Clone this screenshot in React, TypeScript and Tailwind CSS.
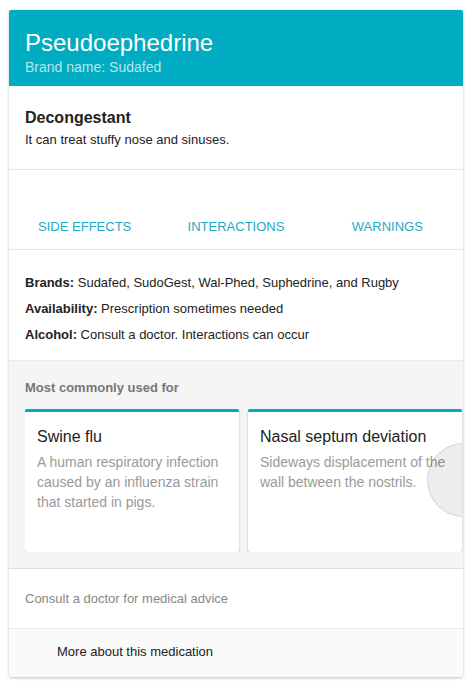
import React from "react";

const font = { fontFamily: '"Liberation Sans", Arial, sans-serif' };

const uses = [
  {
    title: "Swine flu",
    text: "A human respiratory infection caused by an influenza strain that started in pigs."
  },
  {
    title: "Nasal septum deviation",
    text: "Sideways displacement of the wall between the nostrils."
  }
];

export default function App() {
  return (
    <div className="min-h-[686px] bg-white pt-[10px] pl-[9px]" style={font}>
      <div className="w-[454px] rounded-[2px] bg-white shadow-[0_1px_3px_rgba(0,0,0,0.25)] overflow-hidden">
        {/* header */}
        <div className="h-[76px] bg-[#00acc1] pt-[19px] px-4">
          <div className="text-[24px] leading-[28px] text-white">Pseudoephedrine</div>
          <div className="mt-px text-[14px] leading-[18px] text-[#b5e6ed]">Brand name: Sudafed</div>
        </div>

        {/* summary */}
        <div className="px-4 pt-[22px] pb-[20px] border-b border-[#e8e8e8]">
          <div className="text-[16px] leading-[20px] font-bold text-[#222]">Decongestant</div>
          <div className="mt-[3px] text-[13px] leading-[18px] text-[#222]">It can treat stuffy nose and sinuses.</div>
        </div>

        {/* tabs */}
        <div className="grid grid-cols-3 h-[80px] items-end pb-[13px] border-b border-[#e8e8e8]">
          {["SIDE EFFECTS", "INTERACTIONS", "WARNINGS"].map(t => (
            <div key={t} className="text-center text-[13px] leading-[18px] text-[#1fa9c6]">{t}</div>
          ))}
        </div>

        {/* facts */}
        <div className="px-4 pt-5 pb-3 text-[13px] leading-[26px] text-[#222]">
          <div><b>Brands:</b> Sudafed, SudoGest, Wal-Phed, Suphedrine, and Rugby</div>
          <div><b>Availability:</b> Prescription sometimes needed</div>
          <div><b>Alcohol:</b> Consult a doctor. Interactions can occur</div>
        </div>

        {/* most commonly used for */}
        <div className="bg-[#f5f5f5] border-t border-[#ececec] border-b border-b-[#dcdcdc] pt-[18px] pb-4 pl-4">
          <div className="text-[13px] leading-[18px] font-bold text-[#777]">Most commonly used for</div>
          <div className="mt-[12px] flex gap-[9px] overflow-hidden">
            {uses.map((u, i) => (
              <div
                key={u.title}
                className="relative shrink-0 w-[214px] h-[143px] bg-white border-t-[3px] border-[#00acc1] rounded-[2px] shadow-[0_1px_2px_rgba(0,0,0,0.3)] overflow-hidden px-3 pt-[15px]"
              >
                <div className="text-[16px] leading-[20px] text-[#222]">{u.title}</div>
                <div className="mt-[5px] text-[14px] leading-[20px] text-[#9a9a9a]">{u.text}</div>
                {i === 1 && (
                  <div className="absolute left-[179px] top-[31px] w-[74px] h-[74px] rounded-full bg-black/[0.07] border border-black/10" />
                )}
              </div>
            ))}
          </div>
        </div>

        {/* disclaimer */}
        <div className="px-4 pt-[21px] pb-[20px] border-b border-[#e8e8e8] text-[13px] leading-[18px] text-[#888]">
          Consult a doctor for medical advice
        </div>

        {/* footer */}
        <div className="bg-[#fafafa] pl-12 pt-[14px] pb-[16px] text-[13px] leading-[18px] text-[#222]">
          More about this medication
        </div>
      </div>
    </div>
  );
}
